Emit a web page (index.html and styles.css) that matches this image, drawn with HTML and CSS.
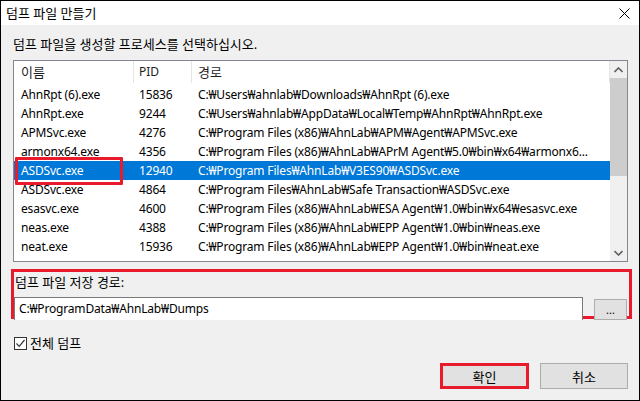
FILE: index.html
```html
<!DOCTYPE html>
<html lang="ko">
<head>
    <meta charset="UTF-8">
    <title>덤프 파일 만들기</title>
    <link rel="stylesheet" href="styles.css">
</head>
<body>
    <div class="window">
        <div class="titlebar">
            <span class="title ko">덤프 파일 만들기</span>
            <svg class="close" width="11" height="11" viewBox="0 0 11 11">
                <path d="M0.5 0.5 L10.5 10.5 M10.5 0.5 L0.5 10.5" stroke="#000" stroke-width="1" fill="none"/>
            </svg>
        </div>

        <div class="client">
            <div class="prompt ko">덤프 파일을 생성할 프로세스를 선택하십시오.</div>

            <div class="list">
                <div class="rows">
                    <div class="row head">
                        <span class="c-name ko">이름</span>
                        <span class="c-pid">PID</span>
                        <span class="c-path ko">경로</span>
                    </div>
                    <div class="row"><span class="c-name">AhnRpt (6).exe</span><span class="c-pid">15836</span><span class="c-path">C:₩Users₩ahnlab₩Downloads₩AhnRpt (6).exe</span></div>
                    <div class="row"><span class="c-name">AhnRpt.exe</span><span class="c-pid">9244</span><span class="c-path">C:₩Users₩ahnlab₩AppData₩Local₩Temp₩AhnRpt₩AhnRpt.exe</span></div>
                    <div class="row"><span class="c-name">APMSvc.exe</span><span class="c-pid">4276</span><span class="c-path">C:₩Program Files (x86)₩AhnLab₩APM₩Agent₩APMSvc.exe</span></div>
                    <div class="row"><span class="c-name">armonx64.exe</span><span class="c-pid">4356</span><span class="c-path">C:₩Program Files (x86)₩AhnLab₩APrM Agent₩5.0₩bin₩x64₩armonx6...</span></div>
                    <div class="row selected"><span class="c-name">ASDSvc.exe</span><span class="c-pid">12940</span><span class="c-path">C:₩Program Files₩AhnLab₩V3ES90₩ASDSvc.exe</span></div>
                    <div class="row"><span class="c-name">ASDSvc.exe</span><span class="c-pid">4864</span><span class="c-path">C:₩Program Files₩AhnLab₩Safe Transaction₩ASDSvc.exe</span></div>
                    <div class="row"><span class="c-name">esasvc.exe</span><span class="c-pid">4600</span><span class="c-path">C:₩Program Files (x86)₩AhnLab₩ESA Agent₩1.0₩bin₩x64₩esasvc.exe</span></div>
                    <div class="row"><span class="c-name">neas.exe</span><span class="c-pid">4388</span><span class="c-path">C:₩Program Files (x86)₩AhnLab₩EPP Agent₩1.0₩bin₩neas.exe</span></div>
                    <div class="row"><span class="c-name">neat.exe</span><span class="c-pid">15936</span><span class="c-path">C:₩Program Files (x86)₩AhnLab₩EPP Agent₩1.0₩bin₩neat.exe</span></div>
                </div>
                <div class="scrollbar">
                    <div class="arrow">
                        <svg width="9" height="6" viewBox="0 0 9 6"><path d="M0.5 5 L4.5 1 L8.5 5" stroke="#606060" stroke-width="1.6" fill="none"/></svg>
                    </div>
                    <div class="track"><div class="thumb"></div></div>
                    <div class="arrow">
                        <svg width="9" height="6" viewBox="0 0 9 6"><path d="M0.5 1 L4.5 5 L8.5 1" stroke="#606060" stroke-width="1.6" fill="none"/></svg>
                    </div>
                </div>
                <div class="mark mark-name"></div>
            </div>

            <div class="save">
                <div class="save-label ko">덤프 파일 저장 경로:</div>
                <div class="save-row">
                    <div class="input">C:₩ProgramData₩AhnLab₩Dumps</div>
                    <div class="btn browse">...</div>
                </div>
            </div>

            <label class="check">
                <span class="box">
                    <svg width="11" height="11" viewBox="0 0 11 11"><path d="M1.5 5.5 L4.2 8.3 L9.5 2" stroke="#333" stroke-width="1.2" fill="none"/></svg>
                </span>
                <span class="ko">전체 덤프</span>
            </label>

            <div class="buttons">
                <div class="btn ok ko">확인</div>
                <div class="btn ko">취소</div>
            </div>
        </div>
    </div>
</body>
</html>
```

FILE: styles.css
```css
html, body {
    margin: 0;
    padding: 0;
}
body {
    font-family: "Noto Sans", "Noto Sans CJK KR", sans-serif;
    font-size: 12px;
    color: #000;
    background: #f0f0f0;
}
.ko {
    font-size: 13px;
}
.window {
    box-sizing: border-box;
    width: 640px;
    height: 401px;
    border: 1px solid #000;
    background: #f0f0f0;
    display: flex;
    flex-direction: column;
}
.titlebar {
    height: 24px;
    background: #fff;
    display: flex;
    align-items: center;
    justify-content: space-between;
    padding: 0 9px 0 5px;
}
.title {
    line-height: 16px;
}
.close {
    margin-top: 1px;
}
.client {
    position: relative;
    padding: 11px 11px 0 12px;
    display: flex;
    flex-direction: column;
}
.prompt {
    line-height: 16px;
    margin-bottom: 8px;
}
.list {
    position: relative;
    box-sizing: border-box;
    height: 202px;
    border: 1px solid #828790;
    background: #fff;
    display: flex;
}
.rows {
    flex: 1;
    overflow: hidden;
}
.row {
    display: flex;
    height: 19px;
    line-height: 19px;
    white-space: nowrap;
    letter-spacing: -0.17px;
}
.row span {
    box-sizing: border-box;
    padding-left: 7px;
    overflow: hidden;
}
.row.head {
    height: 24px;
    line-height: 22px;
    color: #1e1e1e;
    letter-spacing: 0;
}
.row.head span {
    border-right: 1px solid #e5e5e5;
    height: 22px;
}
.c-name { width: 120px; }
.c-pid { width: 58px; padding-left: 5px !important; }
.c-path { flex: 1; padding-left: 6px !important; }
.row.selected {
    background: #0078d7;
    color: #fff;
}
.scrollbar {
    width: 17px;
    background: #f0f0f0;
    display: flex;
    flex-direction: column;
}
.arrow {
    height: 17px;
    display: flex;
    align-items: center;
    justify-content: center;
}
.track {
    flex: 1;
}
.thumb {
    height: 98px;
    background: #cdcdcd;
}
.mark {
    position: absolute;
    border: 3px solid #e81a2b;
    box-sizing: border-box;
    border-radius: 1px;
}
.mark-name {
    left: 1px;
    top: 96px;
    width: 108px;
    height: 28px;
}
.save {
    box-sizing: border-box;
    margin: 7px -4px 0 -2px;
    border: 3px solid #e81a2b;
    padding: 2px 2px 0 0;
    height: 50px;
}
.save-label {
    line-height: 16px;
    margin-left: 1px;
}
.save-row {
    display: flex;
    align-items: flex-start;
    margin-top: 7px;
}
.input {
    box-sizing: border-box;
    width: 570px;
    height: 23px;
    border: 1px solid #7a7a7a;
    border-bottom: none;
    background: #fff;
    line-height: 21px;
    padding-left: 4px;
    letter-spacing: -0.17px;
}
.btn {
    box-sizing: border-box;
    background: #e1e1e1;
    border: 1px solid #adadad;
    display: flex;
    align-items: center;
    justify-content: center;
}
.browse {
    width: 33px;
    height: 21px;
    margin-left: 11px;
    margin-top: 2px;
    font-size: 11px;
    line-height: 1;
}
.check {
    display: flex;
    align-items: center;
    margin-top: 16px;
    line-height: 16px;
}
.box {
    box-sizing: border-box;
    width: 13px;
    height: 13px;
    border: 1px solid #333;
    background: #fff;
    display: flex;
    align-items: center;
    justify-content: center;
    margin: 0 3px 0 1px;
}
.buttons {
    display: flex;
    justify-content: flex-end;
    gap: 11px;
    margin-top: 12px;
}
.buttons .btn {
    width: 88px;
    height: 26px;
}
.btn.ok {
    border: 3px solid #e81a2b;
    width: 89px;
}
```
